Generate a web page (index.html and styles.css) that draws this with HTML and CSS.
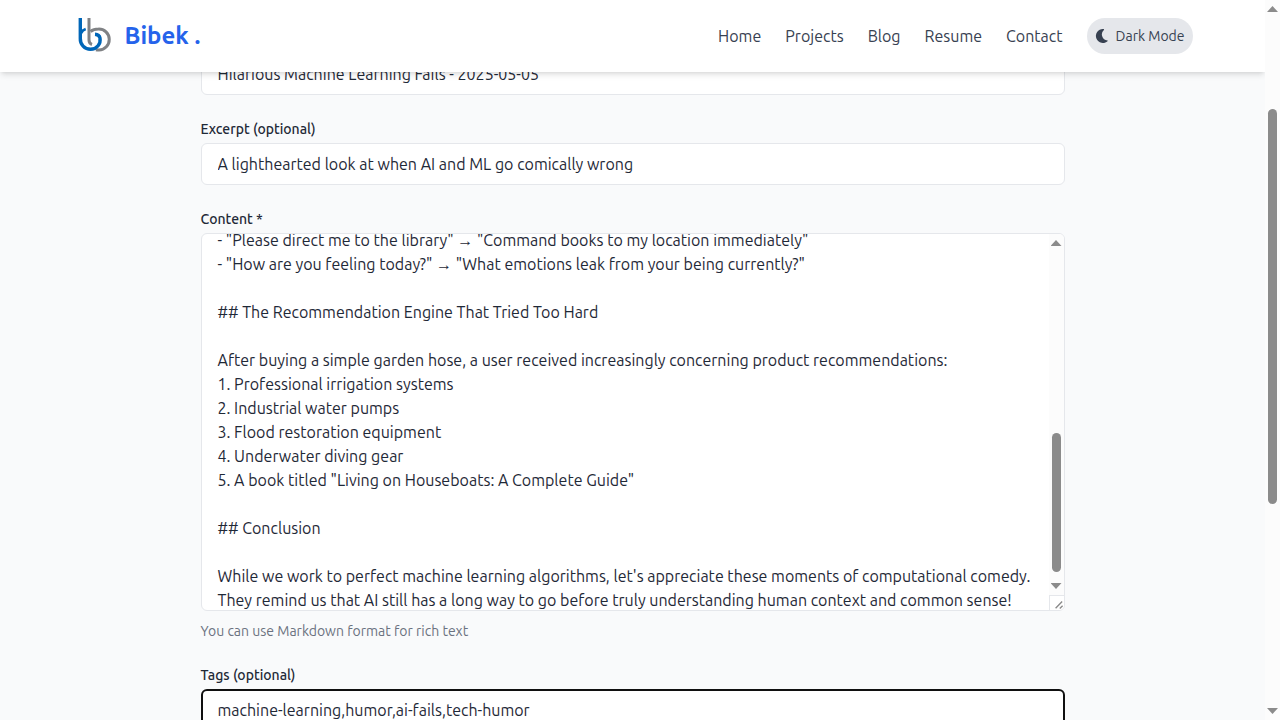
FILE: index.html
```
<!DOCTYPE html>
<html lang="en">
<head>
<meta charset="utf-8">
<title>Bibek - New Post</title>
<link rel="stylesheet" href="styles.css">
</head>
<body>
<div class="viewport">
  <div class="page">
    <header class="site-header">
      <nav class="nav">
        <a class="brand" href="#">
          <svg class="brand-logo" viewBox="-1.5 2 40 40" fill="none" aria-hidden="true">
            <path d="M14.500 4V26Q14.500 29.500 17.500 30.500" stroke="#808285" stroke-width="3"/>
            <path d="M16 17.500Q19 15 24 15A10.500 10.500 0 0 1 24.500 36Q23 36.200 21.500 35.800" stroke="#808285" stroke-width="3"/>
            <path d="M5.800 4V24.500A10.300 10.300 0 0 0 16 35.300C22.500 35.300 26.500 29.500 25.500 24Q24.800 20.500 20.500 20.300" stroke="#0066b8" stroke-width="3.400"/>
            <path d="M6.500 19Q8 16 11.200 15" stroke="#0066b8" stroke-width="2.800"/>
          </svg>
          <span class="brand-name">Bibek .</span>
        </a>
        <div class="nav-links">
          <a class="nav-link" href="#">Home</a>
          <a class="nav-link" href="#">Projects</a>
          <a class="nav-link" href="#">Blog</a>
          <a class="nav-link" href="#">Resume</a>
          <a class="nav-link" href="#">Contact</a>
          <button class="theme-toggle" type="button">
            <svg class="moon" viewBox="0 0 14 14" fill="currentColor" aria-hidden="true"><path d="M8 0A7 7 0 1 0 12.800 12Q13 11.500 12.400 11.500A6.100 6.100 0 0 1 8.900 .9Q9.300 .3 8.700 .1Q8.300 0 8 0Z"/></svg>
            Dark Mode
          </button>
        </div>
      </nav>
    </header>
    <main class="content">
      <form class="post-form">
        <div class="field">
          <input class="control" type="text" aria-label="Title" value="Hilarious Machine Learning Fails - 2025-05-05">
        </div>
        <div class="field">
          <label class="label" for="excerpt">Excerpt (optional)</label>
          <input class="control" id="excerpt" type="text" value="A lighthearted look at when AI and ML go comically wrong">
        </div>
        <div class="field">
          <label class="label" for="body">Content *</label>
          <div class="editor">
            <textarea class="control editor-text" id="body" spellcheck="false">- "Please direct me to the library" → "Command books to my location immediately"
- "How are you feeling today?" → "What emotions leak from your being currently?"

## The Recommendation Engine That Tried Too Hard

After buying a simple garden hose, a user received increasingly concerning product recommendations:
1. Professional irrigation systems
2. Industrial water pumps
3. Flood restoration equipment
4. Underwater diving gear
5. A book titled "Living on Houseboats: A Complete Guide"

## Conclusion

While we work to perfect machine learning algorithms, let's appreciate these moments of computational comedy.
They remind us that AI still has a long way to go before truly understanding human context and common sense!</textarea>
            <div class="editor-side" aria-hidden="true">
              <div class="scrollbar">
                <span class="arrow arrow-up"></span>
                <div class="track track-editor"><span class="thumb"></span></div>
                <span class="arrow arrow-down"></span>
              </div>
              <svg class="grip" viewBox="0 0 15 15" fill="none" stroke="#8b8b8b" stroke-width="1.500"><path d="M6 13L13 6M10.500 13.500L13.500 10.500"/></svg>
            </div>
          </div>
          <p class="hint">You can use Markdown format for rich text</p>
        </div>
        <div class="field">
          <label class="label" for="tags">Tags (optional)</label>
          <input class="control control-active" id="tags" type="text" value="machine-learning,humor,ai-fails,tech-humor">
        </div>
      </form>
    </main>
  </div>
  <div class="scrollbar page-scrollbar" aria-hidden="true">
    <span class="arrow arrow-up"></span>
    <div class="track track-page"><span class="thumb"></span></div>
    <span class="arrow arrow-down"></span>
  </div>
</div>
<script src="script.js"></script>
</body>
</html>
```
FILE: styles.css
```
*, *::before, *::after { box-sizing: border-box; }

body {
  margin: 0;
  font-family: Ubuntu, "Noto Sans", sans-serif;
  font-size: 16px;
  line-height: 24px;
  color: #1f2937;
  background: #f9fafb;
}

.viewport {
  display: flex;
  height: 100vh;
  overflow: hidden;
}

.page {
  position: relative;
  flex: 1;
  min-width: 0;
  overflow: hidden;
}

.site-header {
  position: absolute;
  inset: 0 0 auto;
  z-index: 10;
  background: #fff;
  box-shadow: 0 4px 6px -1px rgba(0, 0, 0, .1), 0 2px 4px -2px rgba(0, 0, 0, .1);
}

.nav {
  display: flex;
  align-items: center;
  justify-content: space-between;
  max-width: 1152px;
  margin: 0 auto;
  padding: 16px;
}

.brand {
  display: flex;
  align-items: center;
  gap: 12px;
  color: #2563eb;
  text-decoration: none;
}

.brand-logo { width: 40px; height: 40px; }

.brand-name { font-size: 24px; line-height: 32px; font-weight: 600; }

.nav-links { display: flex; align-items: center; gap: 24px; }

.nav-link { color: #374151; text-decoration: none; }

.theme-toggle {
  display: flex;
  align-items: center;
  gap: 7px;
  padding: 8px;
  border: 0;
  border-radius: 18px;
  background: #e5e7eb;
  color: #374151;
  font: inherit;
  font-size: 14px;
  line-height: 20px;
}

.moon { width: 14px; height: 14px; }

.content {
  max-width: 896px;
  margin: 0 auto;
  padding: 53px 16px 24px;
}

.post-form { display: flex; flex-direction: column; gap: 24px; }

.field { display: flex; flex-direction: column; gap: 4px; }

.label { font-size: 14px; line-height: 20px; font-weight: 500; }

.control {
  display: block;
  width: 100%;
  padding: 8px 16px;
  border: 1px solid #e5e7eb;
  border-radius: 6px;
  background: #fff;
  color: #1f2937;
  font: inherit;
  outline: none;
}

.control-active { border: 2px solid #101010; padding: 7px 15px; }

.editor { position: relative; }

.editor-text {
  height: 378px;
  padding-right: 31px;
  overflow: hidden;
  resize: none;
}

.editor-side {
  position: absolute;
  inset: 1px 1px 1px auto;
  display: flex;
  flex-direction: column;
  width: 15px;
}

.scrollbar {
  display: flex;
  flex: 1;
  flex-direction: column;
  align-items: center;
  justify-content: space-between;
  width: 15px;
  padding: 6px 0;
  background: #fcfcfc;
  border-radius: 0 5px 0 0;
}

.page-scrollbar { flex: none; border-radius: 0; }

.arrow {
  width: 11px;
  height: 6px;
  background: #8b8b8b;
}

.arrow-up { clip-path: polygon(50% 0, 100% 100%, 0 100%); }
.arrow-down { clip-path: polygon(0 0, 100% 0, 50% 100%); }

.track { display: grid; flex: 1; margin: 3px 0; }
.track-editor { grid-template-rows: 185fr 139fr 8fr; }
.track-page { grid-template-rows: 94fr 395fr 201fr; }

.thumb {
  grid-row: 2;
  width: 9px;
  border-radius: 5px;
  background: #8b8b8b;
}

.grip {
  width: 15px;
  height: 15px;
  border-top: 1px solid #e5e7eb;
  border-left: 1px solid #e5e7eb;
  background: #fff;
  border-radius: 0 0 5px 0;
}

.hint {
  margin: 6px 0 0;
  font-size: 14px;
  line-height: 20px;
  color: #6b7280;
}
```
FILE: script.js
```
const editor = document.getElementById("body");
editor.scrollTop = 14;
```
